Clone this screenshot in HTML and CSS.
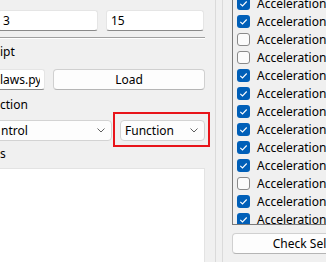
FILE: index.html
```html
<!DOCTYPE html>
<html lang="en">
<head>
  <meta charset="UTF-8">
  <meta name="viewport" content="width=device-width, initial-scale=1.0">
  <title>Controller Setup</title>
  <link rel="stylesheet" href="styles.css">
</head>
<body>
  <div class="window">
    <div class="left">
      <div class="caption cut">Step</div>
      <div class="row first">
        <input class="edit start" type="text" value="3">
        <input class="edit" type="text" value="15">
      </div>
      <div class="sep"></div>
      <div class="caption script">ipt</div>
      <div class="row load">
        <input class="edit file" type="text" value="laws.py">
        <button class="btn grow">Load</button>
      </div>
      <div class="caption func">ction</div>
      <div class="row combos">
        <div class="combo kind">
          <span>ntrol</span>
          <svg class="chev" viewBox="0 0 8 5"><path d="M0.5 0.5L4 4L7.5 0.5"/></svg>
        </div>
        <div class="marked">
          <div class="combo">
            <span>Function</span>
            <svg class="chev" viewBox="0 0 8 5"><path d="M0.5 0.5L4 4L7.5 0.5"/></svg>
          </div>
        </div>
      </div>
      <div class="caption args">s</div>
      <textarea class="notes"></textarea>
    </div>

    <div class="handle"></div>

    <div class="right">
      <div class="list">
        <label class="item"><span class="box on"><svg viewBox="0 0 13 13"><path d="M3.3 6.8L5.5 9L9.7 4.5"/></svg></span>Acceleration X</label>
        <label class="item"><span class="box on"><svg viewBox="0 0 13 13"><path d="M3.3 6.8L5.5 9L9.7 4.5"/></svg></span>Acceleration Y</label>
        <label class="item"><span class="box"></span>Acceleration Z</label>
        <label class="item"><span class="box"></span>Acceleration X (filtered)</label>
        <label class="item"><span class="box on"><svg viewBox="0 0 13 13"><path d="M3.3 6.8L5.5 9L9.7 4.5"/></svg></span>Acceleration Y (filtered)</label>
        <label class="item"><span class="box on"><svg viewBox="0 0 13 13"><path d="M3.3 6.8L5.5 9L9.7 4.5"/></svg></span>Acceleration Z (filtered)</label>
        <label class="item"><span class="box on"><svg viewBox="0 0 13 13"><path d="M3.3 6.8L5.5 9L9.7 4.5"/></svg></span>Acceleration norm</label>
        <label class="item"><span class="box on"><svg viewBox="0 0 13 13"><path d="M3.3 6.8L5.5 9L9.7 4.5"/></svg></span>Acceleration ref X</label>
        <label class="item"><span class="box on"><svg viewBox="0 0 13 13"><path d="M3.3 6.8L5.5 9L9.7 4.5"/></svg></span>Acceleration ref Y</label>
        <label class="item"><span class="box on"><svg viewBox="0 0 13 13"><path d="M3.3 6.8L5.5 9L9.7 4.5"/></svg></span>Acceleration ref Z</label>
        <label class="item"><span class="box"></span>Acceleration error</label>
        <label class="item"><span class="box on"><svg viewBox="0 0 13 13"><path d="M3.3 6.8L5.5 9L9.7 4.5"/></svg></span>Acceleration limit</label>
        <label class="item"><span class="box on"><svg viewBox="0 0 13 13"><path d="M3.3 6.8L5.5 9L9.7 4.5"/></svg></span>Acceleration bias</label>
      </div>
      <button class="btn wide">Check Selected</button>
    </div>
  </div>
</body>
</html>
```

FILE: styles.css
```css
* {
  box-sizing: border-box;
}

body {
  margin: 0;
  width: 326px;
  height: 262px;
  overflow: hidden;
  background: #f0f0f0;
  font-family: "Segoe UI", "Noto Sans", sans-serif;
  font-size: 12px;
  color: #000;
}

.window {
  display: flex;
  align-items: flex-start;
}

.left {
  flex: none;
  width: 205px;
  margin-right: 10px;
  display: flex;
  flex-direction: column;
}

.caption {
  height: 16px;
  line-height: 16px;
  white-space: nowrap;
}

.caption.cut {
  margin-top: -15px;
  padding-left: 2px;
}

.caption.script {
  margin-top: 5px;
}

.caption.func {
  margin-top: 7px;
}

.caption.args {
  margin-top: 5px;
}

.row {
  display: flex;
  gap: 8px;
  height: 21px;
}

.row.first {
  margin-top: 9px;
}

.row.load {
  margin-top: 9px;
}

.row.combos {
  margin-top: 7px;
}

.edit {
  width: 98px;
  height: 21px;
  margin: 0;
  padding: 0 4px;
  border: 1px solid #e5e5e5;
  border-bottom-color: #8a8a8a;
  border-radius: 3px;
  background: #fff;
  font: inherit;
  color: #000;
  outline: none;
}

.edit.start {
  width: 100px;
  margin-left: -2px;
}

.edit.file {
  width: 55px;
  margin-left: -10px;
  padding-left: 9px;
}

.sep {
  margin-top: 6px;
  height: 2px;
  border-top: 1px solid #a0a0a0;
  border-bottom: 1px solid #fff;
}

.btn {
  height: 21px;
  margin: 0;
  padding: 0;
  border: 1px solid #d0d0d0;
  border-bottom-color: #b5b5b5;
  border-radius: 4px;
  background: #fdfdfd;
  font: inherit;
  color: #000;
}

.btn.grow {
  flex: 1;
}

.combo {
  display: flex;
  align-items: center;
  justify-content: space-between;
  width: 85px;
  height: 21px;
  padding: 0 6px 0 4px;
  border: 1px solid #d3d3d3;
  border-radius: 4px;
  background: #fdfdfd;
  white-space: nowrap;
}

.combo.kind {
  width: 122px;
  margin-left: -10px;
  padding-left: 10px;
}

.chev {
  width: 8px;
  height: 5px;
  fill: none;
  stroke: #5f5f5f;
  stroke-width: 1;
}

.marked {
  position: relative;
}

.marked::after {
  content: "";
  position: absolute;
  top: -8px;
  left: -7px;
  right: -5px;
  bottom: -6px;
  border: 2px solid #e8141a;
}

.notes {
  display: block;
  width: 207px;
  height: 110px;
  margin: 6px 0 0 -2px;
  border: 1px solid #e3e3e3;
  background: #fff;
  resize: none;
  outline: none;
}

.handle {
  flex: none;
  width: 8px;
  height: 262px;
  border-left: 1px solid #dadada;
  border-right: 1px solid #dadada;
}

.right {
  flex: none;
  width: 200px;
  padding-left: 9px;
  display: flex;
  flex-direction: column;
}

.list {
  margin-top: -8px;
  height: 233px;
  border: 1px solid #7a7a7a;
  overflow: hidden;
}

.item {
  display: flex;
  align-items: center;
  height: 18px;
  padding-left: 4px;
  white-space: nowrap;
}

.item:first-child {
  margin-top: 1px;
}

.box {
  flex: none;
  width: 13px;
  height: 13px;
  margin-right: 7px;
  border: 1px solid #8a8a8a;
  border-radius: 3px;
  background: #fbfbfb;
}

.box.on {
  border: none;
  background: #005fb8;
}

.box svg {
  display: block;
  width: 13px;
  height: 13px;
  fill: none;
  stroke: #fff;
  stroke-width: 1.1;
}

.btn.wide {
  width: 166px;
  margin-top: 8px;
}
```
